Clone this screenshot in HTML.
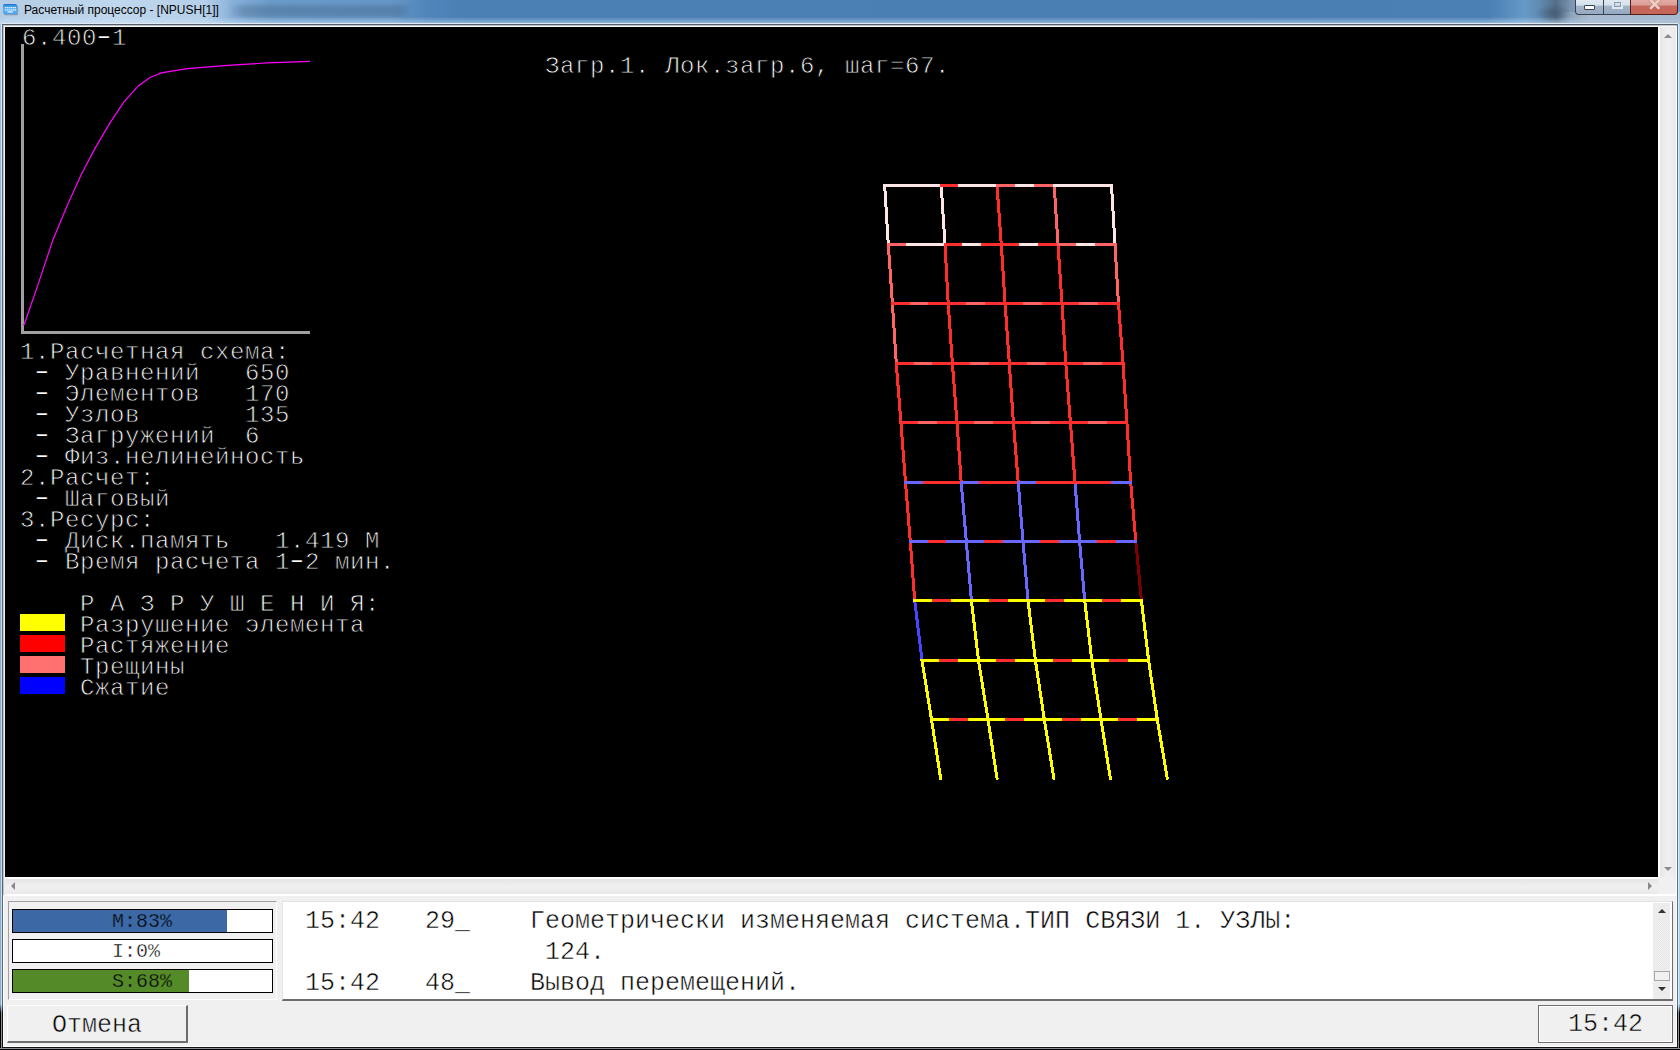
<!DOCTYPE html>
<html><head><meta charset="utf-8">
<style>
*{margin:0;padding:0;box-sizing:border-box}
html,body{width:1680px;height:1050px;overflow:hidden;background:#f0f0f0}
body{position:relative;font-family:"Liberation Mono",monospace}
.a{position:absolute}
#title{left:0;top:0;width:1680px;height:24px;background:linear-gradient(90deg,#b4cde4 0px,#c0d7ec 120px,#b4cfe9 205px,#8ab2da 232px,#6c9ccb 270px,#6898c8 390px,#5086bb 425px,#4a80b4 460px,#4a7fb4 1300px,#4a80b4 1490px,#679ac8 1525px,#5f8ab0 1540px,#546e88 1556px,#7d98b4 1572px,#8aa4c0 1590px,#6d9cc9 1680px)}
#tsmudge{left:1535px;top:4px;width:36px;height:18px;background:radial-gradient(ellipse at center,rgba(40,55,70,.33) 0,rgba(40,55,70,0) 70%)}
#tblur{left:228px;top:5px;width:185px;height:12px;background:linear-gradient(90deg,rgba(50,80,110,0) 0,rgba(50,80,110,.3) 8%,rgba(50,80,110,.3) 92%,rgba(50,80,110,0) 100%);filter:blur(2px)}
#tshade{left:0;top:17px;width:1680px;height:7px;background:linear-gradient(180deg,rgba(200,225,245,0) 0,rgba(205,228,248,.6) 100%)}
#ttext{left:24px;top:3px;font-family:"Liberation Sans",sans-serif;font-size:12px;line-height:14px;color:#000;white-space:nowrap}
.lb{background:#000}
pre{font-family:"Liberation Mono",monospace;white-space:pre;margin:0}
.g{position:absolute;font-family:"Liberation Mono",monospace;font-size:24px;letter-spacing:0.6px;line-height:21px;color:#fff;white-space:pre;-webkit-text-stroke:0.8px #000}
.t{position:absolute;font-family:"Liberation Mono",monospace;font-size:25px;line-height:31px;color:#000;white-space:pre;-webkit-text-stroke:0.5px #f0f0f0}
.h{display:inline-block;transform:translateY(-2px) scaleX(1.55);-webkit-text-stroke:0.2px #000}
.tw{-webkit-text-stroke:0.5px #fff}
.p{position:absolute;font-family:"Liberation Mono",monospace;font-size:20px;line-height:24px;color:#000;white-space:pre}
.bar{position:absolute;left:12px;width:261px;height:24px;border:1px solid #000;background:#fff;overflow:hidden}
</style></head><body>
<!-- title bar -->
<div id="title" class="a"></div>
<div id="tblur" class="a"></div>
<div id="tshade" class="a"></div>
<div id="tsmudge" class="a"></div>
<div class="a" style="left:1560px;top:12px;width:120px;height:12px;background:linear-gradient(90deg,rgba(176,192,210,0) 0,rgba(176,192,210,.8) 25%,rgba(176,192,210,.85) 100%)"></div>
<svg class="a" style="left:2px;top:3px" width="18" height="14" viewBox="0 0 18 14">
<defs><linearGradient id="ic" x1="0" y1="0" x2="0" y2="1"><stop offset="0" stop-color="#1c6cd0"/><stop offset="0.2" stop-color="#3f9aea"/><stop offset="0.6" stop-color="#5ab6f6"/><stop offset="1" stop-color="#46a2ee"/></linearGradient></defs>
<rect x="1.5" y="1.5" width="14" height="10" rx="1.5" fill="#27405a" opacity="0.35" transform="translate(0.6,0.8)"/>
<rect x="1" y="1" width="14" height="10" rx="1.5" fill="url(#ic)"/>
<g fill="#eaf6ff"><rect x="3" y="4" width="1.4" height="1.2"/><rect x="5" y="4" width="1.4" height="1.2"/><rect x="7" y="4" width="1.4" height="1.2"/><rect x="9" y="4" width="1.4" height="1.2"/><rect x="11" y="4" width="1.4" height="1.2"/><rect x="12.8" y="4" width="1.2" height="1.2"/>
<rect x="3" y="6.3" width="1.4" height="1.2"/><rect x="5" y="6.3" width="1.4" height="1.2"/><rect x="7" y="6.3" width="1.4" height="1.2"/><rect x="9" y="6.3" width="1.4" height="1.2"/><rect x="11" y="6.3" width="1.4" height="1.2"/><rect x="12.8" y="6.3" width="1.2" height="1.2"/>
<rect x="5.5" y="8.3" width="5.5" height="1.2"/></g></svg>
<div id="ttext" class="a">Расчетный процессор - [NPUSH[1]]</div>
<!-- caption buttons -->
<div class="a" style="left:1575px;top:-2px;width:56px;height:17px;border:1px solid #3a4250;border-top:none;border-radius:0 0 0 4px;background:linear-gradient(180deg,#e4ecf4 0,#d4e0ec 45%,#a3b4c8 50%,#94a9c2 100%)"></div>
<div class="a" style="left:1603px;top:0px;width:1px;height:14px;background:#3a4250"></div>
<div class="a" style="left:1630px;top:-2px;width:48px;height:17px;border:1px solid #5a1a14;border-top:none;border-radius:0 0 4px 0;background:linear-gradient(180deg,#e6b4ae 0,#d99c94 45%,#c4685c 50%,#c86456 80%,#c06a60 100%)"></div>
<div class="a" style="left:1584px;top:5px;width:11px;height:5px;background:#fff;border:1px solid #3a4250;border-radius:1px"></div>
<div class="a" style="left:1612px;top:0px;width:11px;height:9px;border:2px solid #dfe6ee;box-shadow:inset 0 0 0 1px #8c9cb0"></div>
<svg class="a" style="left:1646px;top:0" width="18" height="12" viewBox="0 0 18 12"><path d="M5 0.5 L12.5 8 M12.5 0.5 L5 8" stroke="#8a4a44" stroke-width="4" stroke-linecap="square" opacity="0.3"/><path d="M5 0.5 L12.5 8 M12.5 0.5 L5 8" stroke="#efcdc8" stroke-width="2.6" stroke-linecap="square"/></svg>
<!-- window frame -->
<div class="a" style="left:0;top:24px;width:1px;height:1026px;background:linear-gradient(180deg,#a8c4e0 0,#8aa8c8 300px,#8eaccc 980px,#000 989px)"></div>
<div class="a" style="left:1px;top:24px;width:1px;height:1026px;background:linear-gradient(180deg,#dcecfa 0,#c8dcee 300px,#c8dcee 980px,#8a9098 989px)"></div>
<div class="a" style="left:1678px;top:24px;width:1px;height:1026px;background:linear-gradient(180deg,#d8ecff 0,#d8ecff 980px,#8a9098 989px)"></div>
<div class="a" style="left:1679px;top:24px;width:1px;height:1026px;background:linear-gradient(180deg,#b0d0f0 0,#b0d0f0 980px,#000 989px)"></div>

<div class="a" style="left:2px;top:23px;width:1676px;height:1px;background:#dfeaf6"></div>
<div class="a" style="left:2px;top:24px;width:1676px;height:1024px;background:#f0f0f0;border-top:1px solid #4f5d6c;border-bottom:1px solid #0e1216"></div>
<div class="a" style="left:2px;top:24px;width:1px;height:1024px;background:linear-gradient(180deg,#586878 0,#586878 980px,#111 989px)"></div>
<div class="a" style="left:1677px;top:24px;width:1px;height:1024px;background:linear-gradient(180deg,#607080 0,#607080 980px,#111 989px)"></div>
<div class="a" style="left:0;top:1048px;width:1680px;height:1px;background:#8a9098"></div>
<div class="a" style="left:0;top:1049px;width:1680px;height:1px;background:#000"></div>
<div class="a" style="left:3px;top:1046px;width:1674px;height:1px;background:#fff"></div>
<div class="a" style="left:3px;top:25px;width:1674px;height:1021px;border-left:1px solid #fff;border-right:1px solid #fff"></div>
<!-- client 3D edge -->
<div class="a" style="left:3px;top:25px;width:1674px;height:1px;background:#c4c4c4"></div>
<div class="a" style="left:3px;top:26px;width:1674px;height:1px;background:#f6f6f6"></div>
<div class="a" style="left:3px;top:25px;width:1px;height:870px;background:#c4c4c4"></div>
<!-- black drawing area -->
<div class="a lb" style="left:5px;top:27px;width:1653px;height:850px"></div>
<!-- vertical scrollbar -->
<div class="a" style="left:1658px;top:27px;width:2px;height:850px;background:#fff"></div>
<div class="a" style="left:1660px;top:27px;width:16px;height:850px;background:linear-gradient(90deg,#e6e6e6 0,#f0f0f0 50%,#e9e9e9 100%)"></div>
<div class="a" style="left:1664px;top:34px;width:0;height:0;border-left:4px solid transparent;border-right:4px solid transparent;border-bottom:4px solid #8c8c8c"></div>
<div class="a" style="left:1664px;top:867px;width:0;height:0;border-left:4px solid transparent;border-right:4px solid transparent;border-top:4px solid #8c8c8c"></div>
<!-- horizontal scrollbar -->
<div class="a" style="left:5px;top:877px;width:1653px;height:2px;background:#fff"></div>
<div class="a" style="left:5px;top:879px;width:1653px;height:15px;background:linear-gradient(180deg,#e6e6e6 0,#f0f0f0 50%,#eaeaea 100%)"></div>
<div class="a" style="left:5px;top:894px;width:1672px;height:2px;background:#fff"></div>
<div class="a" style="left:11px;top:882px;width:0;height:0;border-top:4px solid transparent;border-bottom:4px solid transparent;border-right:4px solid #888"></div>
<div class="a" style="left:1648px;top:882px;width:0;height:0;border-top:4px solid transparent;border-bottom:4px solid transparent;border-left:4px solid #888"></div>

<!-- graphics -->
<svg class="a" style="left:0;top:0" width="1680" height="1050" viewBox="0 0 1680 1050">
<rect x="21" y="44" width="3" height="290" fill="#a0a0a0"/>
<rect x="21" y="331" width="289" height="3" fill="#a0a0a0"/>
<polyline points="23.0,325.0 24.3,324.3 38.6,282.9 52.9,240.0 67.1,205.7 81.4,174.3 95.7,147.1 110.0,122.9 124.3,101.4 138.6,85.7 150.0,77.5 161.4,72.9 187.1,68.6 224.3,65.7 267.0,62.9 310.0,61.4" fill="none" stroke="#ff00ff" stroke-width="1.2"/>
<g stroke-width="3" shape-rendering="crispEdges" stroke-linecap="square">
<line x1="884.7" y1="185.5" x2="888.3" y2="244.6" stroke="#ffe6e6"/>
<line x1="941.2" y1="185.5" x2="945.0" y2="244.6" stroke="#ffe6e6"/>
<line x1="997.0" y1="185.5" x2="1001.3" y2="244.6" stroke="#ff2e2e"/>
<line x1="1054.2" y1="185.5" x2="1058.0" y2="244.6" stroke="#ff6464"/>
<line x1="1111.5" y1="185.5" x2="1115.0" y2="244.6" stroke="#ffe6e6"/>
<line x1="888.3" y1="244.6" x2="892.4" y2="303.6" stroke="#ff6464"/>
<line x1="945.0" y1="244.6" x2="948.2" y2="303.6" stroke="#ff2e2e"/>
<line x1="1001.3" y1="244.6" x2="1005.1" y2="303.6" stroke="#ff2e2e"/>
<line x1="1058.0" y1="244.6" x2="1062.0" y2="303.6" stroke="#ff2e2e"/>
<line x1="1115.0" y1="244.6" x2="1118.5" y2="303.6" stroke="#ff6464"/>
<line x1="892.4" y1="303.6" x2="896.3" y2="363.5" stroke="#ff6464"/>
<line x1="948.2" y1="303.6" x2="952.4" y2="363.5" stroke="#ff2e2e"/>
<line x1="1005.1" y1="303.6" x2="1009.3" y2="363.5" stroke="#ff2e2e"/>
<line x1="1062.0" y1="303.6" x2="1065.8" y2="363.5" stroke="#ff2e2e"/>
<line x1="1118.5" y1="303.6" x2="1123.0" y2="363.5" stroke="#ff2e2e"/>
<line x1="896.3" y1="363.5" x2="900.9" y2="422.4" stroke="#ff2e2e"/>
<line x1="952.4" y1="363.5" x2="957.0" y2="422.4" stroke="#ff2e2e"/>
<line x1="1009.3" y1="363.5" x2="1013.4" y2="422.4" stroke="#ff2e2e"/>
<line x1="1065.8" y1="363.5" x2="1070.4" y2="422.4" stroke="#ff2e2e"/>
<line x1="1123.0" y1="363.5" x2="1126.9" y2="422.4" stroke="#ff2e2e"/>
<line x1="900.9" y1="422.4" x2="905.5" y2="482.3" stroke="#ff2e2e"/>
<line x1="957.0" y1="422.4" x2="961.2" y2="482.3" stroke="#ff2e2e"/>
<line x1="1013.4" y1="422.4" x2="1018.2" y2="482.3" stroke="#ff2e2e"/>
<line x1="1070.4" y1="422.4" x2="1075.0" y2="482.3" stroke="#ff2e2e"/>
<line x1="1126.9" y1="422.4" x2="1130.7" y2="482.3" stroke="#ff2e2e"/>
<line x1="905.5" y1="482.3" x2="910.3" y2="541.4" stroke="#ff2e2e"/>
<line x1="961.2" y1="482.3" x2="966.3" y2="541.4" stroke="#6868ff"/>
<line x1="1018.2" y1="482.3" x2="1023.0" y2="541.4" stroke="#6868ff"/>
<line x1="1075.0" y1="482.3" x2="1079.6" y2="541.4" stroke="#6868ff"/>
<line x1="1130.7" y1="482.3" x2="1135.8" y2="541.4" stroke="#ff2e2e"/>
<line x1="910.3" y1="541.4" x2="914.7" y2="600.4" stroke="#ff2e2e"/>
<line x1="966.3" y1="541.4" x2="971.4" y2="600.4" stroke="#6868ff"/>
<line x1="1023.0" y1="541.4" x2="1028.0" y2="600.4" stroke="#6868ff"/>
<line x1="1079.6" y1="541.4" x2="1084.7" y2="600.4" stroke="#6868ff"/>
<line x1="1135.8" y1="541.4" x2="1141.4" y2="600.4" stroke="#800000"/>
<line x1="914.7" y1="600.4" x2="922.0" y2="660.4" stroke="#4646ff"/>
<line x1="971.4" y1="600.4" x2="978.5" y2="660.4" stroke="#ffff00"/>
<line x1="1028.0" y1="600.4" x2="1035.4" y2="660.4" stroke="#ffff00"/>
<line x1="1084.7" y1="600.4" x2="1091.8" y2="660.4" stroke="#ffff00"/>
<line x1="1141.4" y1="600.4" x2="1148.6" y2="660.4" stroke="#ffff00"/>
<line x1="922.0" y1="660.4" x2="931.5" y2="719.4" stroke="#ffff00"/>
<line x1="978.5" y1="660.4" x2="988.0" y2="719.4" stroke="#ffff00"/>
<line x1="1035.4" y1="660.4" x2="1044.3" y2="719.4" stroke="#ffff00"/>
<line x1="1091.8" y1="660.4" x2="1101.0" y2="719.4" stroke="#ffff00"/>
<line x1="1148.6" y1="660.4" x2="1157.3" y2="719.4" stroke="#ffff00"/>
<line x1="931.5" y1="719.4" x2="940.6" y2="778.2" stroke="#ffff00"/>
<line x1="988.0" y1="719.4" x2="997.0" y2="778.2" stroke="#ffff00"/>
<line x1="1044.3" y1="719.4" x2="1053.9" y2="778.2" stroke="#ffff00"/>
<line x1="1101.0" y1="719.4" x2="1110.3" y2="778.2" stroke="#ffff00"/>
<line x1="1157.3" y1="719.4" x2="1167.2" y2="778.2" stroke="#ffff00"/>
<line x1="884.7" y1="185.5" x2="903.5" y2="185.5" stroke="#ffe6e6"/>
<line x1="903.5" y1="185.5" x2="922.4" y2="185.5" stroke="#ffe6e6"/>
<line x1="922.4" y1="185.5" x2="941.2" y2="185.5" stroke="#ffe6e6"/>
<line x1="941.2" y1="185.5" x2="959.8" y2="185.5" stroke="#ff2e2e"/>
<line x1="959.8" y1="185.5" x2="978.4" y2="185.5" stroke="#ffe6e6"/>
<line x1="978.4" y1="185.5" x2="997.0" y2="185.5" stroke="#ffe6e6"/>
<line x1="997.0" y1="185.5" x2="1016.1" y2="185.5" stroke="#ff6464"/>
<line x1="1016.1" y1="185.5" x2="1035.1" y2="185.5" stroke="#ffe6e6"/>
<line x1="1035.1" y1="185.5" x2="1054.2" y2="185.5" stroke="#ff6464"/>
<line x1="1054.2" y1="185.5" x2="1073.3" y2="185.5" stroke="#ffe6e6"/>
<line x1="1073.3" y1="185.5" x2="1092.4" y2="185.5" stroke="#ffe6e6"/>
<line x1="1092.4" y1="185.5" x2="1111.5" y2="185.5" stroke="#ffe6e6"/>
<line x1="888.3" y1="244.6" x2="907.2" y2="244.6" stroke="#ff6464"/>
<line x1="907.2" y1="244.6" x2="926.1" y2="244.6" stroke="#ffe6e6"/>
<line x1="926.1" y1="244.6" x2="945.0" y2="244.6" stroke="#ffe6e6"/>
<line x1="945.0" y1="244.6" x2="963.8" y2="244.6" stroke="#ff2e2e"/>
<line x1="963.8" y1="244.6" x2="982.5" y2="244.6" stroke="#ffe6e6"/>
<line x1="982.5" y1="244.6" x2="1001.3" y2="244.6" stroke="#ff2e2e"/>
<line x1="1001.3" y1="244.6" x2="1020.2" y2="244.6" stroke="#ff2e2e"/>
<line x1="1020.2" y1="244.6" x2="1039.1" y2="244.6" stroke="#ffe6e6"/>
<line x1="1039.1" y1="244.6" x2="1058.0" y2="244.6" stroke="#ff2e2e"/>
<line x1="1058.0" y1="244.6" x2="1077.0" y2="244.6" stroke="#ff6464"/>
<line x1="1077.0" y1="244.6" x2="1096.0" y2="244.6" stroke="#ffe6e6"/>
<line x1="1096.0" y1="244.6" x2="1115.0" y2="244.6" stroke="#ff6464"/>
<line x1="892.4" y1="303.6" x2="911.0" y2="303.6" stroke="#ff2e2e"/>
<line x1="911.0" y1="303.6" x2="929.6" y2="303.6" stroke="#ff6464"/>
<line x1="929.6" y1="303.6" x2="948.2" y2="303.6" stroke="#ff2e2e"/>
<line x1="948.2" y1="303.6" x2="967.2" y2="303.6" stroke="#ff2e2e"/>
<line x1="967.2" y1="303.6" x2="986.1" y2="303.6" stroke="#ff6464"/>
<line x1="986.1" y1="303.6" x2="1005.1" y2="303.6" stroke="#ff2e2e"/>
<line x1="1005.1" y1="303.6" x2="1024.1" y2="303.6" stroke="#ff2e2e"/>
<line x1="1024.1" y1="303.6" x2="1043.0" y2="303.6" stroke="#ff6464"/>
<line x1="1043.0" y1="303.6" x2="1062.0" y2="303.6" stroke="#ff2e2e"/>
<line x1="1062.0" y1="303.6" x2="1080.8" y2="303.6" stroke="#ff2e2e"/>
<line x1="1080.8" y1="303.6" x2="1099.7" y2="303.6" stroke="#ff6464"/>
<line x1="1099.7" y1="303.6" x2="1118.5" y2="303.6" stroke="#ff2e2e"/>
<line x1="896.3" y1="363.5" x2="915.0" y2="363.5" stroke="#ff2e2e"/>
<line x1="915.0" y1="363.5" x2="933.7" y2="363.5" stroke="#ff6464"/>
<line x1="933.7" y1="363.5" x2="952.4" y2="363.5" stroke="#ff2e2e"/>
<line x1="952.4" y1="363.5" x2="971.4" y2="363.5" stroke="#ff2e2e"/>
<line x1="971.4" y1="363.5" x2="990.3" y2="363.5" stroke="#ff6464"/>
<line x1="990.3" y1="363.5" x2="1009.3" y2="363.5" stroke="#ff2e2e"/>
<line x1="1009.3" y1="363.5" x2="1028.1" y2="363.5" stroke="#ff2e2e"/>
<line x1="1028.1" y1="363.5" x2="1047.0" y2="363.5" stroke="#ff6464"/>
<line x1="1047.0" y1="363.5" x2="1065.8" y2="363.5" stroke="#ff2e2e"/>
<line x1="1065.8" y1="363.5" x2="1084.9" y2="363.5" stroke="#ff2e2e"/>
<line x1="1084.9" y1="363.5" x2="1103.9" y2="363.5" stroke="#ff6464"/>
<line x1="1103.9" y1="363.5" x2="1123.0" y2="363.5" stroke="#ff2e2e"/>
<line x1="900.9" y1="422.4" x2="919.6" y2="422.4" stroke="#ff2e2e"/>
<line x1="919.6" y1="422.4" x2="938.3" y2="422.4" stroke="#ff6464"/>
<line x1="938.3" y1="422.4" x2="957.0" y2="422.4" stroke="#ff2e2e"/>
<line x1="957.0" y1="422.4" x2="975.8" y2="422.4" stroke="#ff2e2e"/>
<line x1="975.8" y1="422.4" x2="994.6" y2="422.4" stroke="#ff6464"/>
<line x1="994.6" y1="422.4" x2="1013.4" y2="422.4" stroke="#ff2e2e"/>
<line x1="1013.4" y1="422.4" x2="1032.4" y2="422.4" stroke="#ff2e2e"/>
<line x1="1032.4" y1="422.4" x2="1051.4" y2="422.4" stroke="#ff6464"/>
<line x1="1051.4" y1="422.4" x2="1070.4" y2="422.4" stroke="#ff2e2e"/>
<line x1="1070.4" y1="422.4" x2="1089.2" y2="422.4" stroke="#ff2e2e"/>
<line x1="1089.2" y1="422.4" x2="1108.1" y2="422.4" stroke="#ff6464"/>
<line x1="1108.1" y1="422.4" x2="1126.9" y2="422.4" stroke="#ff2e2e"/>
<line x1="905.5" y1="482.3" x2="924.1" y2="482.3" stroke="#6868ff"/>
<line x1="924.1" y1="482.3" x2="942.6" y2="482.3" stroke="#ff2e2e"/>
<line x1="942.6" y1="482.3" x2="961.2" y2="482.3" stroke="#ff2e2e"/>
<line x1="961.2" y1="482.3" x2="980.2" y2="482.3" stroke="#6868ff"/>
<line x1="980.2" y1="482.3" x2="999.2" y2="482.3" stroke="#ff2e2e"/>
<line x1="999.2" y1="482.3" x2="1018.2" y2="482.3" stroke="#ff2e2e"/>
<line x1="1018.2" y1="482.3" x2="1037.1" y2="482.3" stroke="#6868ff"/>
<line x1="1037.1" y1="482.3" x2="1056.1" y2="482.3" stroke="#ff2e2e"/>
<line x1="1056.1" y1="482.3" x2="1075.0" y2="482.3" stroke="#ff2e2e"/>
<line x1="1075.0" y1="482.3" x2="1093.6" y2="482.3" stroke="#ff2e2e"/>
<line x1="1093.6" y1="482.3" x2="1112.1" y2="482.3" stroke="#ff2e2e"/>
<line x1="1112.1" y1="482.3" x2="1130.7" y2="482.3" stroke="#6868ff"/>
<line x1="910.3" y1="541.4" x2="929.0" y2="541.4" stroke="#6868ff"/>
<line x1="929.0" y1="541.4" x2="947.6" y2="541.4" stroke="#ff2e2e"/>
<line x1="947.6" y1="541.4" x2="966.3" y2="541.4" stroke="#6868ff"/>
<line x1="966.3" y1="541.4" x2="985.2" y2="541.4" stroke="#6868ff"/>
<line x1="985.2" y1="541.4" x2="1004.1" y2="541.4" stroke="#ff2e2e"/>
<line x1="1004.1" y1="541.4" x2="1023.0" y2="541.4" stroke="#6868ff"/>
<line x1="1023.0" y1="541.4" x2="1041.9" y2="541.4" stroke="#6868ff"/>
<line x1="1041.9" y1="541.4" x2="1060.7" y2="541.4" stroke="#ff2e2e"/>
<line x1="1060.7" y1="541.4" x2="1079.6" y2="541.4" stroke="#6868ff"/>
<line x1="1079.6" y1="541.4" x2="1098.3" y2="541.4" stroke="#6868ff"/>
<line x1="1098.3" y1="541.4" x2="1117.1" y2="541.4" stroke="#ff2e2e"/>
<line x1="1117.1" y1="541.4" x2="1135.8" y2="541.4" stroke="#6868ff"/>
<line x1="914.7" y1="600.4" x2="933.6" y2="600.4" stroke="#ffff00"/>
<line x1="933.6" y1="600.4" x2="952.5" y2="600.4" stroke="#ff2e2e"/>
<line x1="952.5" y1="600.4" x2="971.4" y2="600.4" stroke="#ffff00"/>
<line x1="971.4" y1="600.4" x2="990.3" y2="600.4" stroke="#ffff00"/>
<line x1="990.3" y1="600.4" x2="1009.1" y2="600.4" stroke="#ff2e2e"/>
<line x1="1009.1" y1="600.4" x2="1028.0" y2="600.4" stroke="#ffff00"/>
<line x1="1028.0" y1="600.4" x2="1046.9" y2="600.4" stroke="#ffff00"/>
<line x1="1046.9" y1="600.4" x2="1065.8" y2="600.4" stroke="#ff2e2e"/>
<line x1="1065.8" y1="600.4" x2="1084.7" y2="600.4" stroke="#ffff00"/>
<line x1="1084.7" y1="600.4" x2="1103.6" y2="600.4" stroke="#ffff00"/>
<line x1="1103.6" y1="600.4" x2="1122.5" y2="600.4" stroke="#ff2e2e"/>
<line x1="1122.5" y1="600.4" x2="1141.4" y2="600.4" stroke="#ffff00"/>
<line x1="922.0" y1="660.4" x2="940.8" y2="660.4" stroke="#ffff00"/>
<line x1="940.8" y1="660.4" x2="959.7" y2="660.4" stroke="#ff2e2e"/>
<line x1="959.7" y1="660.4" x2="978.5" y2="660.4" stroke="#ffff00"/>
<line x1="978.5" y1="660.4" x2="997.5" y2="660.4" stroke="#ffff00"/>
<line x1="997.5" y1="660.4" x2="1016.4" y2="660.4" stroke="#ff2e2e"/>
<line x1="1016.4" y1="660.4" x2="1035.4" y2="660.4" stroke="#ffff00"/>
<line x1="1035.4" y1="660.4" x2="1054.2" y2="660.4" stroke="#ffff00"/>
<line x1="1054.2" y1="660.4" x2="1073.0" y2="660.4" stroke="#ff2e2e"/>
<line x1="1073.0" y1="660.4" x2="1091.8" y2="660.4" stroke="#ffff00"/>
<line x1="1091.8" y1="660.4" x2="1110.7" y2="660.4" stroke="#ffff00"/>
<line x1="1110.7" y1="660.4" x2="1129.7" y2="660.4" stroke="#ff2e2e"/>
<line x1="1129.7" y1="660.4" x2="1148.6" y2="660.4" stroke="#ffff00"/>
<line x1="931.5" y1="719.4" x2="950.3" y2="719.4" stroke="#ffff00"/>
<line x1="950.3" y1="719.4" x2="969.2" y2="719.4" stroke="#ff2e2e"/>
<line x1="969.2" y1="719.4" x2="988.0" y2="719.4" stroke="#ffff00"/>
<line x1="988.0" y1="719.4" x2="1006.8" y2="719.4" stroke="#ffff00"/>
<line x1="1006.8" y1="719.4" x2="1025.5" y2="719.4" stroke="#ff2e2e"/>
<line x1="1025.5" y1="719.4" x2="1044.3" y2="719.4" stroke="#ffff00"/>
<line x1="1044.3" y1="719.4" x2="1063.2" y2="719.4" stroke="#ffff00"/>
<line x1="1063.2" y1="719.4" x2="1082.1" y2="719.4" stroke="#ff2e2e"/>
<line x1="1082.1" y1="719.4" x2="1101.0" y2="719.4" stroke="#ffff00"/>
<line x1="1101.0" y1="719.4" x2="1119.8" y2="719.4" stroke="#ffff00"/>
<line x1="1119.8" y1="719.4" x2="1138.5" y2="719.4" stroke="#ff2e2e"/>
<line x1="1138.5" y1="719.4" x2="1157.3" y2="719.4" stroke="#ffff00"/>
</g>
<rect x="20" y="614" width="45" height="17" fill="#ffff00"/>
<rect x="20" y="635" width="45" height="17" fill="#ff0000"/>
<rect x="20" y="656" width="45" height="17" fill="#ff7070"/>
<rect x="20" y="677" width="45" height="17" fill="#0000ff"/>
</svg>
<div class="g" style="left:22px;top:28px">6.400<span class="h">-</span>1</div>
<div class="g" style="left:545px;top:56px">Загр.1. Лок.загр.6, шаг=67.</div>
<div class="g" style="left:20px;top:342px">1.Расчетная схема:
 <span class="h">-</span> Уравнений   650
 <span class="h">-</span> Элементов   170
 <span class="h">-</span> Узлов       135
 <span class="h">-</span> Загружений  6
 <span class="h">-</span> Физ.нелинейность
2.Расчет:
 <span class="h">-</span> Шаговый
3.Ресурс:
 <span class="h">-</span> Диск.память   1.419 М
 <span class="h">-</span> Время расчета 1<span class="h">-</span>2 мин.

    Р А З Р У Ш Е Н И Я:
    Разрушение элемента
    Растяжение
    Трещины
    Сжатие</div>

<!-- bottom panel -->
<div class="a" style="left:8px;top:901px;width:269px;height:99px;border-top:1px solid #a0a0a0;border-left:1px solid #a0a0a0;border-right:1px solid #fff;border-bottom:1px solid #fff"></div>
<div class="bar" style="top:909px"><div class="a" style="left:0;top:0;width:214px;height:22px;background:#3c69a5"></div></div>
<div class="bar" style="top:939px"></div>
<div class="bar" style="top:969px"><div class="a" style="left:0;top:0;width:176px;height:22px;background:#548a27"></div></div>
<div class="p" style="left:112px;top:910px;-webkit-text-stroke:0.4px #3c69a5">M:83%</div>
<div class="p" style="left:112px;top:940px;-webkit-text-stroke:0.4px #fff">I:0%</div>
<div class="p" style="left:112px;top:970px;-webkit-text-stroke:0.4px #548a27">S:68%</div>

<div class="a" style="left:282px;top:901px;width:391px;height:100px;background:#fff"></div>
<div class="a" style="left:282px;top:901px;width:1391px;height:100px;background:#fff;border-top:1px solid #e3e3e3;border-left:1px solid #e3e3e3;border-right:1px solid #6d6d6d;border-bottom:2px solid #6d6d6d"></div>
<div class="a" style="left:1653px;top:903px;width:17px;height:96px;background:repeating-conic-gradient(#f2f2f2 0 25%,#e6e6e6 0 50%) 0 0/2px 2px"></div>
<div class="a" style="left:1654px;top:903px;width:16px;height:17px;background:#ececec"></div>
<div class="a" style="left:1654px;top:982px;width:16px;height:17px;background:#ececec"></div>
<div class="a" style="left:1654px;top:971px;width:16px;height:10px;border:1px solid #a8a8a8;background:#f0f0f0"></div>
<div class="a" style="left:1658px;top:909px;width:0;height:0;border-left:4px solid transparent;border-right:4px solid transparent;border-bottom:4px solid #333"></div>
<div class="a" style="left:1658px;top:987px;width:0;height:0;border-left:4px solid transparent;border-right:4px solid transparent;border-top:4px solid #333"></div>
<div class="t tw" style="left:305px;top:906px">15:42   29_    Геометрически изменяемая система.ТИП СВЯЗИ 1. УЗЛЫ:
                124.
15:42   48_    Вывод перемещений.</div>

<div class="a" style="left:7px;top:1005px;width:181px;height:38px;border-top:1px solid #fff;border-left:1px solid #fff;border-right:2px solid #6d6d6d;border-bottom:2px solid #6d6d6d;background:#f0f0f0"></div>
<div class="t" style="left:52px;top:1010px">Отмена</div>
<div class="a" style="left:1538px;top:1005px;width:135px;height:38px;border:1px solid #6d6d6d;border-right-color:#6d6d6d;box-shadow:inset -1px -1px 0 #fff, inset 1px 1px 0 #fff;background:#f0f0f0"></div>
<div class="t" style="left:1568px;top:1009px">15:42</div>
</body></html>
